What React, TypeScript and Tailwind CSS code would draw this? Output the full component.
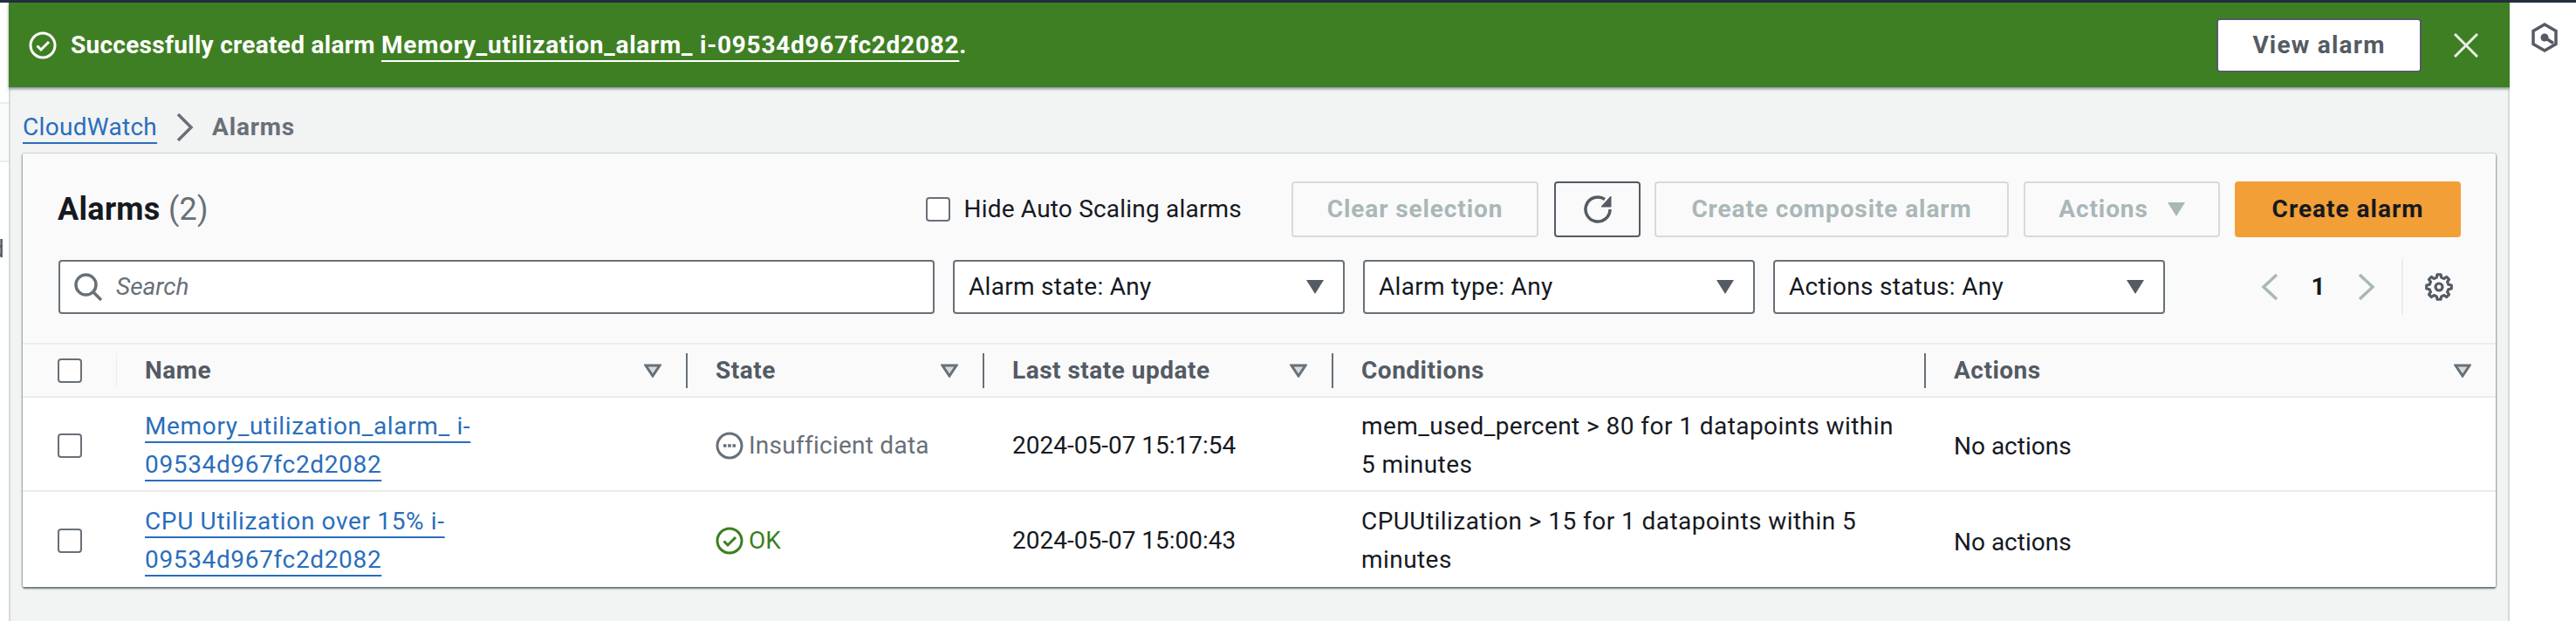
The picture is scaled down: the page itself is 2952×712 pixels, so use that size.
import React from "react";

const gearPath = (() => {
  const teeth = 8;
  const cx = 8, cy = 8, ro = 7.2, ri = 5.6;
  const pts: string[] = [];
  for (let i = 0; i < teeth; i++) {
    const a = (i / teeth) * Math.PI * 2 - Math.PI / 2;
    const w = Math.PI / teeth;
    const list: [number, number][] = [
      [ri, a - w * 0.62],
      [ro, a - w * 0.36],
      [ro, a + w * 0.36],
      [ri, a + w * 0.62],
    ];
    for (const [r, t] of list) {
      pts.push(`${(cx + r * Math.cos(t)).toFixed(2)} ${(cy + r * Math.sin(t)).toFixed(2)}`);
    }
  }
  return "M" + pts.join("L") + "Z";
})();

const Checkbox = () => (
  <span className="block w-[28px] h-[28px] shrink-0 rounded-[4px] border-2 border-[#687078] bg-white" />
);

const Caret = ({ color = "#545b64" }: { color?: string }) => (
  <svg width="20" height="16" viewBox="0 0 20 16" className="shrink-0">
    <polygon points="0,0 20,0 10,16" fill={color} />
  </svg>
);

const SortIcon = () => (
  <svg width="20" height="16" viewBox="0 0 20 16" className="shrink-0">
    <polygon points="2,2 18,2 10,14" fill="#d5dbdb" stroke="#687078" strokeWidth="3" strokeLinejoin="miter" />
  </svg>
);

const CheckCircle = ({ color, w = 3 }: { color: string; w?: number }) => (
  <svg width="32" height="32" viewBox="0 0 32 32" className="shrink-0" fill="none">
    <circle cx="16" cy="16" r="14" stroke={color} strokeWidth={w} />
    <path d="M9.5 16.5l4.5 4.5 9-9" stroke={color} strokeWidth={w} />
  </svg>
);

const Select = ({ label }: { label: string }) => (
  <div className="w-[449px] h-[62px] shrink-0 flex items-center justify-between pl-[16px] pr-[22px] bg-white border-2 border-[#687078] rounded-[4px] text-[#16191f] tracking-[0.3px]">
    <span>{label}</span>
    <Caret />
  </div>
);

const DisabledButton = ({ children, className }: { children: React.ReactNode; className: string }) => (
  <div className={`h-[64px] flex items-center justify-center border-2 border-[#d5dbdb] rounded-[4px] font-bold tracking-[0.9px] text-[#aab7b8] ${className}`}>
    {children}
  </div>
);

const colClass = "grid grid-cols-[108px_654px_340px_400px_679px_653px]";

const HeadCell = ({ label, divider = true }: { label: string; divider?: boolean }) => (
  <div className="flex items-center pl-[32px] h-full">
    <span className="flex-1 font-bold tracking-[0.5px] text-[#545b64]">{label}</span>
    <SortIcon />
    {divider ? <span className="block w-[2px] h-[40px] ml-[28px] bg-[#687078]" /> : <span className="block w-[28px]" />}
  </div>
);

const linkClass =
  "text-[#2a6ebb] underline decoration-2 underline-offset-[8px] [text-decoration-skip-ink:none]";

const Row = ({
  name,
  state,
  update,
  cond,
  last,
}: {
  name: string;
  state: React.ReactNode;
  update: string;
  cond: string;
  last?: boolean;
}) => (
  <div className={`${colClass} bg-white pt-[3px] ${last ? "h-[109px]" : "h-[108px] border-b-2 border-[#eaeded]"}`}>
    <div className="flex items-center pl-[40px]">
      <Checkbox />
    </div>
    <div className="flex items-center pl-[32px] pr-[90px]">
      <a className={`${linkClass} tracking-[0.65px]`}>{name}</a>
    </div>
    <div className="flex items-center pl-[32px]">{state}</div>
    <div className="flex items-center pl-[32px] text-[#16191f]">{update}</div>
    <div className="flex items-center pl-[32px] pr-[21px] text-[#16191f] tracking-[0.44px]">{cond}</div>
    <div className="flex items-center pl-[32px] pt-[3px] text-[#16191f]">No actions</div>
  </div>
);

export default function App() {
  return (
    <div
      className="w-[2952px] h-[712px] overflow-hidden flex flex-col bg-white text-[28px] leading-[44px]"
      style={{ fontFamily: "Roboto, 'Liberation Sans', sans-serif" }}
    >
      <div className="h-[3px] shrink-0 bg-[#232f3e]" />
      <div className="flex flex-1 min-h-0">
        {/* left collapsed nav */}
        <aside className="w-[10px] shrink-0 overflow-hidden bg-white flex flex-col">
          <div className="mt-[114px] h-[69px] shrink-0 bg-[#fafafa] border-y-2 border-[#eaeded]" />
          <div className="mt-[78px] -ml-[11px] font-normal text-[#545b64]">d</div>
        </aside>

        {/* main */}
        <main className="w-[2866px] shrink-0 flex flex-col bg-[#f2f3f3] border-l-2 border-r-2 border-[#d5dbdb]">
          <div className="h-[97px] shrink-0 -mx-[2px] flex items-center bg-[#3f7f24] shadow-[0_2px_3px_rgba(0,28,36,0.45)] pl-[23px] pr-[36px] text-white">
            <CheckCircle color="#ffffff" />
            <span className="ml-[16px] font-bold tracking-[0.28px]">
              Successfully created alarm{" "}
              <a className="tracking-[0.75px] underline decoration-2 underline-offset-[8px] [text-decoration-skip-ink:none]">
                Memory_utilization_alarm_ i-09534d967fc2d2082
              </a>
              .
            </span>
            <div className="ml-auto w-[235px] h-[62px] flex items-center justify-center bg-white border-2 border-[#545b64] rounded-[4px] font-bold tracking-[1.2px] text-[#545b64]">
              View alarm
            </div>
            <svg width="28" height="28" viewBox="0 0 28 28" className="ml-[37px] shrink-0" fill="none">
              <path d="M1 1l26 26M27 1L1 27" stroke="#e9efe6" strokeWidth="3" />
            </svg>
          </div>

          <nav className="h-[76px] shrink-0 flex items-center pl-[14px] pt-[16px]">
            <a className={`${linkClass} tracking-[0.3px]`}>CloudWatch</a>
            <svg width="20" height="32" viewBox="0 0 20 32" className="ml-[22px] shrink-0" fill="none">
              <path d="M2 1l15 15L2 31" stroke="#687078" strokeWidth="3.5" />
            </svg>
            <span className="ml-[21px] font-bold tracking-[0.8px] text-[#687078]">Alarms</span>
          </nav>

          <section className="mx-[14px] h-[497px] shrink-0 flex flex-col overflow-hidden rounded-[2px] bg-[#fafafa] shadow-[0_2px_2px_rgba(0,28,36,0.55),-1px_0_2px_rgba(0,28,36,0.25),1px_0_2px_rgba(0,28,36,0.25)]">
            <div className="h-[217px] shrink-0 flex flex-col pt-[32px] pl-[40px] pr-[40px]">
              <div className="h-[64px] shrink-0 flex items-center justify-between">
                <h1 className="text-[36px] leading-[44px] font-bold tracking-[0.3px] text-[#16191f]">
                  Alarms <span className="font-normal text-[#687078]">(2)</span>
                </h1>
                <div className="flex items-center">
                  <Checkbox />
                  <span className="ml-[15px] tracking-[0.2px] text-[#16191f]">Hide Auto Scaling alarms</span>
                  <DisabledButton className="ml-[57px] w-[283px]">Clear selection</DisabledButton>
                  <div className="ml-[18px] w-[99px] h-[64px] flex items-center justify-center border-2 border-[#545b64] rounded-[4px]">
                    <svg width="32" height="32" viewBox="0 0 32 32" fill="none">
                      <path d="M30 16A14 14 0 1 1 24 4.5" stroke="#545b64" strokeWidth="3.5" />
                      <polygon points="31,1 31,13 20,13" fill="#545b64" stroke="#545b64" strokeWidth="1" />
                    </svg>
                  </div>
                  <DisabledButton className="ml-[16px] w-[406px]">Create composite alarm</DisabledButton>
                  <DisabledButton className="ml-[17px] w-[225px] gap-[22px]">
                    Actions <Caret color="#aab7b8" />
                  </DisabledButton>
                  <div className="ml-[17px] w-[259px] h-[64px] flex items-center justify-center rounded-[4px] bg-[#f29f38] font-bold tracking-[1px] text-[#16191f]">
                    Create alarm
                  </div>
                </div>
              </div>

              <div className="mt-[25px] h-[64px] shrink-0 flex items-center">
                <div className="w-[1004px] h-[62px] shrink-0 flex items-center pl-[16px] bg-white border-2 border-[#687078] rounded-[4px] ml-[1px]">
                  <svg width="32" height="32" viewBox="0 0 32 32" fill="none" className="shrink-0">
                    <circle cx="13.5" cy="13.5" r="11.5" stroke="#687078" strokeWidth="3.5" />
                    <path d="M21.5 21.5L31 31" stroke="#687078" strokeWidth="3.5" />
                  </svg>
                  <span className="ml-[16px] italic text-[#687078]">Search</span>
                </div>
                <div className="ml-[21px] flex gap-[21px]">
                  <Select label="Alarm state: Any" />
                  <Select label="Alarm type: Any" />
                  <Select label="Actions status: Any" />
                </div>
                <svg width="20" height="30" viewBox="0 0 20 30" className="ml-[110px] shrink-0" fill="none">
                  <path d="M18 1L3 15l15 14" stroke="#aab7b8" strokeWidth="3.5" />
                </svg>
                <span className="w-[91px] shrink-0 text-center font-bold text-[#16191f]">1</span>
                <svg width="20" height="30" viewBox="0 0 20 30" className="shrink-0" fill="none">
                  <path d="M2 1l15 14L2 29" stroke="#aab7b8" strokeWidth="3.5" />
                </svg>
                <span className="block ml-[30px] w-[2px] h-[64px] bg-[#eaeded] shrink-0" />
                <svg width="32" height="32" viewBox="0 0 16 16" className="ml-[25px] shrink-0" fill="none">
                  <path d={gearPath} stroke="#545b64" strokeWidth="1.6" strokeLinejoin="round" />
                  <circle cx="8" cy="8" r="2" stroke="#545b64" strokeWidth="1.6" />
                </svg>
              </div>
            </div>

            <div className={`${colClass} h-[63px] shrink-0 border-y-2 border-[#eaeded] bg-[#fafafa]`}>
              <div className="flex items-center pl-[40px] h-full">
                <Checkbox />
                <span className="block ml-[39px] w-[2px] h-[40px] bg-[#eaeded]" />
              </div>
              <HeadCell label="Name" />
              <HeadCell label="State" />
              <HeadCell label="Last state update" />
              <div className="flex items-center pl-[32px] h-full">
                <span className="flex-1 font-bold tracking-[0.5px] text-[#545b64]">Conditions</span>
                <span className="block w-[2px] h-[40px] bg-[#687078]" />
              </div>
              <HeadCell label="Actions" divider={false} />
            </div>

            <Row
              name="Memory_utilization_alarm_ i-09534d967fc2d2082"
              state={
                <span className="flex items-center gap-[6px] tracking-[0.25px] text-[#687078]">
                  <svg width="32" height="32" viewBox="0 0 32 32" fill="none" className="shrink-0">
                    <circle cx="16" cy="16" r="14" stroke="#687078" strokeWidth="3" />
                    <path d="M9 16h3.5M14.2 16h3.6M19.5 16H23" stroke="#687078" strokeWidth="3.5" />
                  </svg>
                  Insufficient data
                </span>
              }
              update="2024-05-07 15:17:54"
              cond="mem_used_percent > 80 for 1 datapoints within 5 minutes"
            />
            <Row
              last
              name="CPU Utilization over 15% i-09534d967fc2d2082"
              state={
                <span className="flex items-center gap-[6px] text-[#3b7f1f]">
                  <CheckCircle color="#3b7f1f" />
                  OK
                </span>
              }
              update="2024-05-07 15:00:43"
              cond="CPUUtilization > 15 for 1 datapoints within 5 minutes"
            />
          </section>
        </main>

        {/* right rail */}
        <aside className="flex-1 bg-white flex justify-center pt-[23px] pl-[4px]">
          <svg width="32" height="34" viewBox="0 0 32 34" fill="none" className="shrink-0">
            <polygon points="16,2 29,9.5 29,24.5 16,32 3,24.5 3,9.5" stroke="#545b64" strokeWidth="3.5" />
            <circle cx="16" cy="17" r="4.5" fill="#545b64" />
            <path d="M16 17l10 6.5" stroke="#545b64" strokeWidth="3.5" />
          </svg>
        </aside>
      </div>
    </div>
  );
}
